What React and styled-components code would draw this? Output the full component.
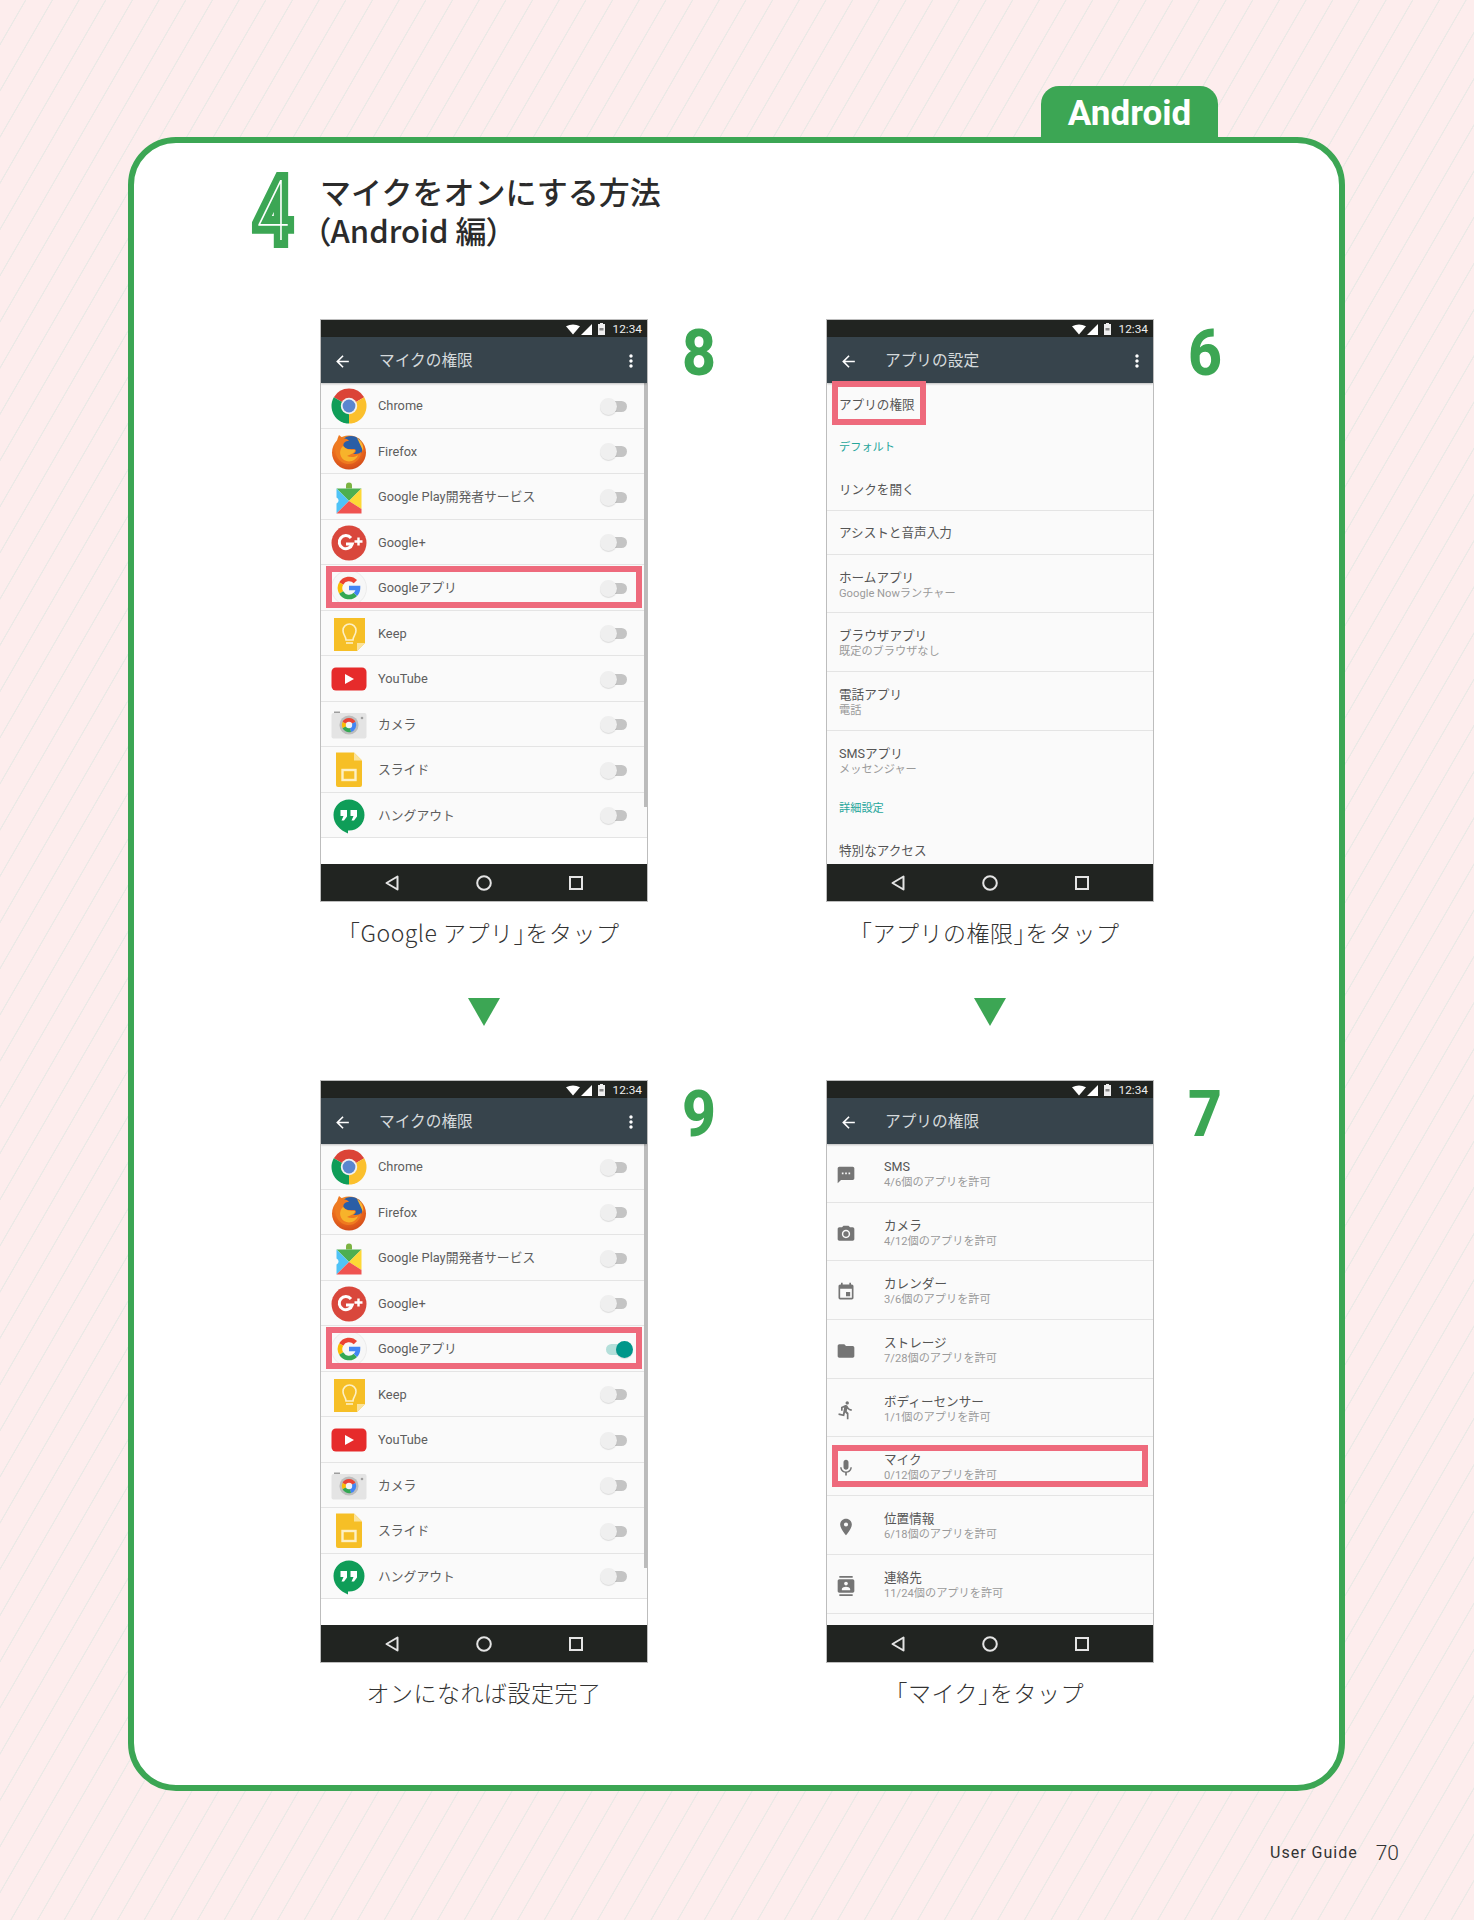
import React from 'react';
import styled, { createGlobalStyle } from 'styled-components';
import {
  MdArrowBack,
  MdMoreVert,
  MdTextsms,
  MdPhotoCamera,
  MdEvent,
  MdFolder,
  MdDirectionsRun,
  MdMic,
  MdPlace,
  MdContacts,
} from 'react-icons/md';

const GREEN = '#3ca654';
const PINK = '#ee6a7c';
const CJK = '"Noto Sans CJK JP", sans-serif';
const UI = 'Roboto, "Noto Sans CJK JP", sans-serif';

const GlobalStyle = createGlobalStyle`
  html, body { margin: 0; padding: 0; }
  body { font-family: ${UI}; }
`;

const Page = styled.div`
  width: 1474px;
  height: 1920px;
  padding-top: 86px;
  box-sizing: border-box;
  overflow: hidden;
  background-color: #fdeded;
  background-image: repeating-linear-gradient(
    120deg,
    transparent 0 21.4px,
    #ebe9e6 21.9px 22.7px,
    transparent 23.1px
  );
`;

const TabRow = styled.div`
  display: flex;
  justify-content: flex-end;
  padding-right: 256px;
`;

const Tab = styled.div`
  width: 177px;
  height: 51px;
  border-radius: 18px 18px 0 0;
  background: ${GREEN};
  color: #fff;
  font: 700 35px/55px Roboto, sans-serif;
  text-align: center;
`;

const Card = styled.div`
  width: 1217px;
  height: 1654px;
  margin-left: 128px;
  padding: 31px 0 0 114px;
  box-sizing: border-box;
  border: 6px solid ${GREEN};
  border-radius: 48px;
  background: #fff;
`;

const Heading = styled.div`
  display: flex;
  height: 76px;
`;

const HeadingNumber = styled.div`
  width: 72px;
  margin-top: -13px;
  font: 100 82px/100px Inter, Roboto, sans-serif;
  color: #fff;
  -webkit-text-stroke: 16px ${GREEN};
  paint-order: stroke fill;
  transform: translateX(4px) scaleX(0.8);
  transform-origin: 8px 50%;
`;

const HeadingText = styled.h1`
  margin: -3px 0 0;
  font: 500 31px/39px ${CJK};
  color: #2b2b2b;
`;

const HeadingNote = styled.span`
  margin-left: -5px;
  font-feature-settings: 'palt';
`;

const Grid = styled.div`
  display: grid;
  grid-template-columns: 506px 506px;
  margin: 69px 0 0 72px;
`;

const Step = styled.div`
  display: flex;
  flex-direction: column;
  height: 761px;
`;

const PhoneRow = styled.div`
  display: flex;
`;

const StepNumber = styled.div`
  margin: 3px 0 0 34px;
  font: 800 64px/64px Roboto, sans-serif;
  color: ${GREEN};
  transform: scaleX(0.92);
  transform-origin: 0 50%;
`;

const Caption = styled.div`
  width: 328px;
  height: 61px;
  font: 300 23px/${(p) => p.$lh}px ${CJK};
  letter-spacing: 0.5px;
  color: #333;
  text-align: center;
`;

const Bracket = styled.span`
  font-feature-settings: 'halt';
`;

const ArrowDown = styled.div`
  width: 0;
  height: 0;
  margin: 35px 0 0 148px;
  border-left: 16.5px solid transparent;
  border-right: 16.5px solid transparent;
  border-top: 28px solid ${GREEN};
`;

const Phone = styled.div`
  position: relative;
  display: flex;
  flex-direction: column;
  width: 328px;
  height: 583px;
  box-sizing: border-box;
  border: 1px solid #bdbdbd;
  background: #fff;
  overflow: hidden;
`;

const StatusBar = styled.div`
  display: flex;
  align-items: center;
  justify-content: flex-end;
  flex: none;
  height: 17px;
  padding: 1px 5px 0 0;
  box-sizing: border-box;
  background: #212421;
  color: #eee;
  font: 400 11.8px/17px Roboto, sans-serif;
`;

const StatusTime = styled.span`
  margin-left: 8px;
`;

const StatusIcon = styled.svg`
  display: block;
  margin-left: ${(p) => p.$gap || 0}px;
`;

const AppBar = styled.div`
  display: flex;
  align-items: center;
  flex: none;
  height: 46px;
  padding: 2px 6px 0 12px;
  box-sizing: border-box;
  background: #37444c;
  color: #fff;
  box-shadow: 0 1px 2px rgba(0, 0, 0, 0.25);
  position: relative;
  z-index: 1;
`;

const AppBarTitle = styled.div`
  flex: 1;
  margin-left: 27px;
  font: 400 15.7px/44px ${UI};
  color: #d5dadc;
`;

const Content = styled.div`
  position: relative;
  flex: 1;
  min-height: 0;
`;

const NavBar = styled.div`
  position: relative;
  z-index: 1;
  display: flex;
  justify-content: center;
  flex: none;
  height: 37px;
  background: #212421;
`;

const NavItem = styled.div`
  display: flex;
  align-items: center;
  justify-content: center;
  width: 92px;
`;

const AppRow = styled.div`
  position: relative;
  display: flex;
  align-items: center;
  height: 45.5px;
  box-sizing: border-box;
  padding: 2px 14px 0 10px;
  background: #fafafa;
  border-bottom: 1px solid #e4e4e4;
`;

const AppIconBox = styled.div`
  flex: none;
  width: 36px;
  height: 36px;
  margin-right: 11px;
`;

const AppName = styled.div`
  flex: 1;
  font: 400 12.8px/16px ${UI};
  color: #5e5e5e;
`;

const Toggle = styled.div`
  position: relative;
  flex: none;
  width: 33px;
  height: 17px;
`;

const ToggleTrack = styled.div`
  position: absolute;
  left: 6px;
  top: 3px;
  width: 21px;
  height: 11px;
  border-radius: 6px;
  background: ${(p) => (p.$on ? '#b4dfda' : '#c4c4c4')};
`;

const ToggleThumb = styled.div`
  position: absolute;
  left: ${(p) => (p.$on ? 16 : 0)}px;
  top: 0;
  width: 17px;
  height: 17px;
  border-radius: 50%;
  background: ${(p) => (p.$on ? '#00978a' : '#efefef')};
  box-shadow: 0 1px 1px rgba(0, 0, 0, 0.12);
`;

const ScrollThumb = styled.div`
  position: absolute;
  top: 0;
  right: 0;
  width: 3px;
  height: 424px;
  background: #bbb;
`;

const Highlight = styled.div`
  position: absolute;
  z-index: 2;
  top: ${(p) => p.$top}px;
  bottom: ${(p) => p.$bottom}px;
  left: ${(p) => p.$left}px;
  right: ${(p) => p.$right}px;
  border: 6px solid ${PINK};
  box-sizing: border-box;
`;

const SettingRow = styled.div`
  position: relative;
  height: ${(p) => p.$h}px;
  box-sizing: border-box;
  padding: 0 12px;
  background: #fafafa;
  border-bottom: ${(p) => (p.$line ? '1px solid #e4e4e4' : '0')};
  font: 400 12.6px/${(p) => p.$h}px ${UI};
  color: ${(p) => (p.$section ? '#26a69a' : '#555')};
  ${(p) => p.$section && 'font-size: 11.2px;'}
`;

const TwoLineRow = styled.div`
  position: relative;
  height: 58.7px;
  box-sizing: border-box;
  padding: 15px 12px 0;
  background: #fafafa;
  border-bottom: ${(p) => (p.$line ? '1px solid #e4e4e4' : '0')};
`;

const Title = styled.div`
  font: 400 12.6px/16px ${UI};
  color: #555;
`;

const Sub = styled.div`
  font: 400 11.2px/16px ${UI};
  color: #9a9a9a;
`;

const PermRow = styled(TwoLineRow)`
  display: flex;
  padding-left: 9px;
  color: #757575;
`;

const PermIcon = styled.div`
  flex: none;
  width: 20px;
  margin: 6px 28px 0 0;
  font-size: 20px;
  line-height: 20px;
`;

const PermFill = styled.div`
  height: 20px;
  background: #fafafa;
`;

const Footer = styled.div`
  display: flex;
  align-items: center;
  justify-content: flex-end;
  margin-top: 48px;
  padding-right: 75px;
  color: #333;
`;

const FooterLabel = styled.span`
  font: 400 16px/28px Roboto, sans-serif;
  letter-spacing: 1px;
`;

const PageNumber = styled.span`
  margin-left: 18px;
  font: 300 21px/28px Roboto, sans-serif;
`;

const ChromeIcon = () => (
  <svg viewBox="0 0 36 36" width="36" height="36">
    <path d="M18 18L2.8 9.3A17.5 17.5 0 0 1 33.2 9.3Z" fill="#db4437" />
    <path d="M18 18L33.2 9.3A17.5 17.5 0 0 1 18 35.5Z" fill="#fbc02d" />
    <path d="M18 18L18 35.5A17.5 17.5 0 0 1 2.8 9.3Z" fill="#0f9d58" />
    <circle cx="18" cy="18" r="8.2" fill="#f1f1f1" />
    <circle cx="18" cy="18" r="6.4" fill="#5a86cf" />
  </svg>
);

const FirefoxIcon = () => (
  <svg viewBox="0 0 36 36" width="36" height="36">
    <defs>
      <radialGradient id="fx" cx="0.45" cy="0.3" r="0.8">
        <stop offset="0" stopColor="#fbb02d" />
        <stop offset="0.6" stopColor="#e8661c" />
        <stop offset="1" stopColor="#c8401a" />
      </radialGradient>
    </defs>
    <circle cx="18" cy="18.5" r="17" fill="url(#fx)" />
    <circle cx="20" cy="13.5" r="11.5" fill="#2a5ea6" />
    <path d="M8 1C12 5 16 4 18 7C14 7 12 9 12.5 12C15 16 19 15 23 15C26 15 25 19 22 20C25 20 28 20 30 18C30 25 23 31 16 30C9 29 3 22 5 13C5.5 9 6 5 8 1Z" fill="#ef7a20" />
    <path d="M12 12C15 16 20 16 24 16C24 19 20 20 16 22C20 24 25 23 27 21C25 27 18 29 13 26C8 22 8 16 12 12Z" fill="#f7b32b" />
    <path d="M26 4C31 7 33 12 32 17C30 12 28 8 26 4Z" fill="#ffb52e" />
  </svg>
);

const PlayIcon = () => (
  <svg viewBox="0 0 36 36" width="36" height="36">
    <path d="M15 6.5A3 3 0 0 1 21 6.5V9.5H15Z" fill="#7cb342" />
    <path d="M5.5 9.5H30.5L18 22Z" fill="#4caf50" />
    <path d="M5.5 9.5L18 22L5.5 34.5V24.5A3.2 3.2 0 0 0 5.5 18.5Z" fill="#4fc3f7" />
    <path d="M30.5 9.5V30L18 22Z" fill="#fdd835" />
    <path d="M5.5 34.5L18 22L30.5 30V34.5Z" fill="#ef5350" />
  </svg>
);

const GooglePlusIcon = () => (
  <svg viewBox="0 0 36 36" width="36" height="36">
    <circle cx="18" cy="18" r="17.5" fill="#d9473c" />
    <path d="M20 13A6.6 6.6 0 1 0 21.2 19H15" fill="none" stroke="#fff" strokeWidth="3" />
    <path d="M27.5 12.5V20.5M23.5 16.5H31.5" stroke="#fff" strokeWidth="2.4" />
  </svg>
);

const GoogleIcon = () => (
  <svg viewBox="0 0 36 36" width="36" height="36">
    <circle cx="18" cy="18" r="17.5" fill="#f7f7f7" stroke="#ececec" />
    <g fill="none" strokeWidth="4.6">
      <path d="M24.4 11.6A9 9 0 0 0 10.2 13.5" stroke="#ea4335" />
      <path d="M10.2 13.5A9 9 0 0 0 10.2 22.5" stroke="#fbbc05" />
      <path d="M10.2 22.5A9 9 0 0 0 24.4 24.4" stroke="#34a853" />
      <path d="M24.4 24.4A9 9 0 0 0 27 18H18" stroke="#4285f4" />
    </g>
  </svg>
);

const KeepIcon = () => (
  <svg viewBox="0 0 36 36" width="36" height="36">
    <path d="M3 2H34V27L26 35H3Z" fill="#f6bf26" />
    <path d="M34 27H26V35Z" fill="#fbe39a" />
    <path d="M15 24C15 20 12 19 12 14.5A6.5 6.5 0 0 1 25 14.5C25 19 22 20 22 24Z" fill="none" stroke="#fdf0c4" strokeWidth="1.6" />
    <path d="M15 27H22" stroke="#fdf0c4" strokeWidth="1.6" />
  </svg>
);

const YouTubeIcon = () => (
  <svg viewBox="0 0 36 36" width="36" height="36">
    <rect x="0.5" y="6.5" width="35" height="23" rx="4.5" fill="#e62b2b" />
    <path d="M14 13V23L23 18Z" fill="#fff" />
  </svg>
);

const CameraIcon = () => (
  <svg viewBox="0 0 36 36" width="36" height="36">
    <path d="M3 4.5H9V6.5H3Z" fill="#9e9e9e" />
    <rect x="0.5" y="6" width="35" height="25.5" rx="2" fill="#e4e4e4" />
    <circle cx="31" cy="11" r="1.3" fill="#9e9e9e" />
    <circle cx="18" cy="18" r="9.6" fill="#bdbdbd" />
    <path d="M18 18L11.5 15A7.2 7.2 0 0 1 24.5 15Z" fill="#ea4335" />
    <path d="M18 18L24.5 15A7.2 7.2 0 0 1 20 25Z" fill="#4285f4" />
    <path d="M18 18L20 25A7.2 7.2 0 0 1 11.5 21Z" fill="#34a853" />
    <path d="M18 18L11.5 21A7.2 7.2 0 0 1 11.5 15Z" fill="#fbbc05" />
    <circle cx="18" cy="18" r="3.2" fill="#f4f4f4" />
  </svg>
);

const SlidesIcon = () => (
  <svg viewBox="0 0 36 36" width="36" height="36">
    <path d="M5 0.5H23L31 8.5V33A2 2 0 0 1 29 35H7A2 2 0 0 1 5 33Z" fill="#f6bf26" />
    <path d="M23 0.5L31 8.5H23Z" fill="#fbe39a" />
    <rect x="11.5" y="18" width="13" height="10" fill="none" stroke="#fdf0c4" strokeWidth="2.4" />
  </svg>
);

const HangoutsIcon = () => (
  <svg viewBox="0 0 36 36" width="36" height="36">
    <path d="M18 1.5A15.5 15.5 0 0 1 18 32.5H17V35.5C9 32 2.5 26 2.5 17A15.5 15.5 0 0 1 18 1.5Z" fill="#0f9d58" />
    <path d="M9.5 12H16V18.5L13 22.5H10.5L12.5 18H9.5ZM19.5 12H26V18.5L23 22.5H20.5L22.5 18H19.5Z" fill="#fff" />
  </svg>
);

const APP_LIST = [
  ['Chrome', ChromeIcon],
  ['Firefox', FirefoxIcon],
  ['Google Play開発者サービス', PlayIcon],
  ['Google+', GooglePlusIcon],
  ['Googleアプリ', GoogleIcon],
  ['Keep', KeepIcon],
  ['YouTube', YouTubeIcon],
  ['カメラ', CameraIcon],
  ['スライド', SlidesIcon],
  ['ハングアウト', HangoutsIcon],
];

const PERMISSIONS = [
  ['SMS', '4/6個のアプリを許可', MdTextsms],
  ['カメラ', '4/12個のアプリを許可', MdPhotoCamera],
  ['カレンダー', '3/6個のアプリを許可', MdEvent],
  ['ストレージ', '7/28個のアプリを許可', MdFolder],
  ['ボディーセンサー', '1/1個のアプリを許可', MdDirectionsRun],
  ['マイク', '0/12個のアプリを許可', MdMic],
  ['位置情報', '6/18個のアプリを許可', MdPlace],
  ['連絡先', '11/24個のアプリを許可', MdContacts],
];

const PhoneFrame = ({ title, menu, children }) => (
  <Phone>
    <StatusBar>
      <StatusIcon width="14" height="11" viewBox="0 0 14 11">
        <path d="M0 2.2Q7 -1.4 14 2.2L7 10.5Z" fill="#fff" />
      </StatusIcon>
      <StatusIcon $gap={1} width="11" height="11" viewBox="0 0 11 11">
        <path d="M11 0V11H0Z" fill="#fff" />
      </StatusIcon>
      <StatusIcon $gap={6} width="7" height="12" viewBox="0 0 7 12">
        <path d="M2 0H5V1H7V12H0V1H2Z" fill="#eee" />
        <path d="M1.5 5H5.5V7.5H1.5Z" fill="#888" />
      </StatusIcon>
      <StatusTime>12:34</StatusTime>
    </StatusBar>
    <AppBar>
      <MdArrowBack size={19} />
      <AppBarTitle>{title}</AppBarTitle>
      {menu && <MdMoreVert size={20} />}
    </AppBar>
    <Content>{children}</Content>
    <NavBar>
      <NavItem>
        <svg width="14" height="16" viewBox="0 0 14 16">
          <path d="M12.5 1.5V14.5L1.5 8Z" fill="none" stroke="#e4e4e4" strokeWidth="2" strokeLinejoin="round" />
        </svg>
      </NavItem>
      <NavItem>
        <svg width="16" height="16" viewBox="0 0 16 16">
          <circle cx="8" cy="8" r="6.8" fill="none" stroke="#e4e4e4" strokeWidth="2" />
        </svg>
      </NavItem>
      <NavItem>
        <svg width="14" height="14" viewBox="0 0 14 14">
          <rect x="1" y="1" width="12" height="12" fill="none" stroke="#e4e4e4" strokeWidth="2" />
        </svg>
      </NavItem>
    </NavBar>
  </Phone>
);

const AppsScreen = ({ on }) => (
  <PhoneFrame title="マイクの権限" menu>
    {APP_LIST.map(([name, Icon]) => (
      <AppRow key={name}>
        <AppIconBox>
          <Icon />
        </AppIconBox>
        <AppName>{name}</AppName>
        <Toggle>
          <ToggleTrack $on={on && name === 'Googleアプリ'} />
          <ToggleThumb $on={on && name === 'Googleアプリ'} />
        </Toggle>
        {name === 'Googleアプリ' && <Highlight $top={1} $bottom={2} $left={5} $right={5} />}
      </AppRow>
    ))}
    <ScrollThumb />
  </PhoneFrame>
);

const SettingsScreen = () => (
  <PhoneFrame title="アプリの設定" menu>
    <SettingRow $h={43}>
      アプリの権限
      <Highlight $top={-2} $bottom={1} $left={5} $right={227} />
    </SettingRow>
    <SettingRow $h={43} $section>デフォルト</SettingRow>
    <SettingRow $h={42} $line>リンクを開く</SettingRow>
    <SettingRow $h={43.5} $line>アシストと音声入力</SettingRow>
    <TwoLineRow $line>
      <Title>ホームアプリ</Title>
      <Sub>Google Nowランチャー</Sub>
    </TwoLineRow>
    <TwoLineRow $line>
      <Title>ブラウザアプリ</Title>
      <Sub>既定のブラウザなし</Sub>
    </TwoLineRow>
    <TwoLineRow $line>
      <Title>電話アプリ</Title>
      <Sub>電話</Sub>
    </TwoLineRow>
    <TwoLineRow>
      <Title>SMSアプリ</Title>
      <Sub>メッセンジャー</Sub>
    </TwoLineRow>
    <SettingRow $h={40} $section>詳細設定</SettingRow>
    <SettingRow $h={44}>特別なアクセス</SettingRow>
  </PhoneFrame>
);

const PermissionsScreen = () => (
  <PhoneFrame title="アプリの権限">
    {PERMISSIONS.map(([title, sub, Icon]) => (
      <PermRow key={title} $line>
        <PermIcon>
          <Icon />
        </PermIcon>
        <div>
          <Title>{title}</Title>
          <Sub>{sub}</Sub>
        </div>
        {title === 'マイク' && <Highlight $top={8} $bottom={8} $left={5} $right={5} />}
      </PermRow>
    ))}
    <PermFill />
  </PhoneFrame>
);

const StepCell = ({ number, caption, lineHeight, arrow, children }) => (
  <Step>
    <PhoneRow>
      {children}
      <StepNumber>{number}</StepNumber>
    </PhoneRow>
    <Caption $lh={lineHeight}>{caption}</Caption>
    {arrow && <ArrowDown />}
  </Step>
);

export default function App() {
  return (
    <Page>
      <GlobalStyle />
      <TabRow>
        <Tab>Android</Tab>
      </TabRow>
      <Card>
        <Heading>
          <HeadingNumber>4</HeadingNumber>
          <HeadingText>
            マイクをオンにする方法
            <br />
            <HeadingNote>（Android 編）</HeadingNote>
          </HeadingText>
        </Heading>
        <Grid>
          <StepCell
            number="8"
            lineHeight={61}
            arrow
            caption={
              <>
                <Bracket>「</Bracket>Google アプリ<Bracket>」</Bracket>をタップ
              </>
            }
          >
            <AppsScreen />
          </StepCell>
          <StepCell
            number="6"
            lineHeight={61}
            arrow
            caption={
              <>
                <Bracket>「</Bracket>アプリの権限<Bracket>」</Bracket>をタップ
              </>
            }
          >
            <SettingsScreen />
          </StepCell>
          <StepCell number="9" lineHeight={59} caption="オンになれば設定完了">
            <AppsScreen on />
          </StepCell>
          <StepCell
            number="7"
            lineHeight={59}
            caption={
              <>
                <Bracket>「</Bracket>マイク<Bracket>」</Bracket>をタップ
              </>
            }
          >
            <PermissionsScreen />
          </StepCell>
        </Grid>
      </Card>
      <Footer>
        <FooterLabel>User Guide</FooterLabel>
        <PageNumber>70</PageNumber>
      </Footer>
    </Page>
  );
}
